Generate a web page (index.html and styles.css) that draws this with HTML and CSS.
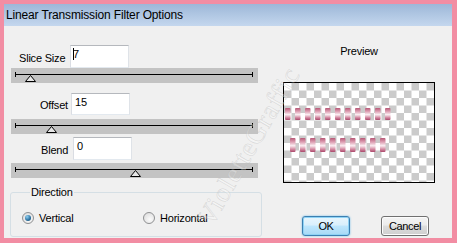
FILE: index.html
```html
<!DOCTYPE html>
<html lang="en">
<head>
  <meta charset="UTF-8">
  <title>Linear Transmission Filter Options</title>
  <link rel="stylesheet" href="styles.css">
</head>
<body>

  <div class="dialog">
    <div class="titlebar">Linear Transmission Filter Options</div>
    <div class="client">

      <div class="left">
        <div class="field field-slice">
          <label>Slice Size</label>
          <div class="input"><span class="caret"></span>7</div>
        </div>
        <div class="slider">
          <div class="rail"></div>
          <svg class="thumb" style="margin-left:14px" width="11" height="7"><polygon points="5.5,0.5 10.5,6.5 0.5,6.5" /></svg>
        </div>

        <div class="field field-offset">
          <label>Offset</label>
          <div class="input">15</div>
        </div>
        <div class="slider">
          <div class="rail"></div>
          <svg class="thumb" style="margin-left:35px" width="11" height="7"><polygon points="5.5,0.5 10.5,6.5 0.5,6.5" /></svg>
        </div>

        <div class="field field-blend">
          <label>Blend</label>
          <div class="input">0</div>
        </div>
        <div class="slider">
          <div class="rail"></div>
          <svg class="thumb" style="margin-left:119px" width="11" height="7"><polygon points="5.5,0.5 10.5,6.5 0.5,6.5" /></svg>
        </div>

        <fieldset class="group">
          <legend>Direction</legend>
          <div class="radios">
            <div class="radio checked"><span class="dot"></span>Vertical</div>
            <div class="radio"><span class="dot"></span>Horizontal</div>
          </div>
        </fieldset>
      </div>

      <div class="right">
        <div class="preview-wrap">
          <div class="preview-label">Preview</div>
          <div class="preview">
            <svg width="150" height="99">
              <defs>
                <pattern id="checker" width="15" height="15" patternUnits="userSpaceOnUse">
                  <rect width="15" height="15" fill="#ffffff" />
                  <rect x="7.5" width="7.5" height="7.5" fill="#cbcbcb" />
                  <rect y="7.5" width="7.5" height="7.5" fill="#cbcbcb" />
                </pattern>
                <linearGradient id="bar" x1="0" y1="0" x2="0" y2="1">
                  <stop offset="0" stop-color="#b65876" />
                  <stop offset="0.3" stop-color="#dfa3b6" />
                  <stop offset="0.55" stop-color="#fbeef2" />
                  <stop offset="0.8" stop-color="#d48aa2" />
                  <stop offset="1" stop-color="#a9486a" />
                </linearGradient>
              </defs>
              <rect width="150" height="99" fill="url(#checker)" />
              <g fill="url(#bar)">
                <rect x="1" y="25" width="5.5" height="12" rx="1" />
                <rect x="11" y="25" width="5.5" height="12" rx="1" />
                <rect x="21" y="25" width="5.5" height="12" rx="1" />
                <rect x="31" y="25" width="5.5" height="12" rx="1" />
                <rect x="41" y="25" width="5.5" height="12" rx="1" />
                <rect x="51" y="25" width="5.5" height="12" rx="1" />
                <rect x="61" y="25" width="5.5" height="12" rx="1" />
                <rect x="71" y="25" width="5.5" height="12" rx="1" />
                <rect x="81" y="25" width="5.5" height="12" rx="1" />
                <rect x="91" y="25" width="5.5" height="12" rx="1" />
                <rect x="101" y="25" width="5.5" height="12" rx="1" />
              </g>
              <g fill="url(#bar)">
                <rect x="6" y="55" width="5.5" height="14" rx="1" />
                <rect x="16" y="55" width="5.5" height="14" rx="1" />
                <rect x="26" y="55" width="5.5" height="14" rx="1" />
                <rect x="36" y="55" width="5.5" height="14" rx="1" />
                <rect x="46" y="55" width="5.5" height="14" rx="1" />
                <rect x="56" y="55" width="5.5" height="14" rx="1" />
                <rect x="66" y="55" width="5.5" height="14" rx="1" />
                <rect x="76" y="55" width="5.5" height="14" rx="1" />
                <rect x="86" y="55" width="5.5" height="14" rx="1" />
                <rect x="96" y="55" width="5.5" height="14" rx="1" />
              </g>
            </svg>
          </div>
        </div>
        <div class="buttons">
          <div class="btn btn-ok">OK</div>
          <div class="btn">Cancel</div>
        </div>
      </div>

    </div>
    <div class="watermark">VioletteGraffic</div>
  </div>

</body>
</html>
```

FILE: styles.css
```css
* {
  box-sizing: border-box;
}
body {
  margin: 0;
  background: #f28da3;
  font-family: "Liberation Sans", Arial, sans-serif;
  font-size: 11px;
  color: #000;
}
.dialog {
  position: relative;
  width: 457px;
  height: 243px;
  border-style: solid;
  border-color: #f28da3;
  border-width: 4px 5px 5px 4px;
  background: #f0f0f0;
  overflow: hidden;
}
.titlebar {
  height: 22px;
  padding: 4px 0 0 2px;
  background: linear-gradient(#9db7d8, #c4d7ee);
  font-size: 12px;
  letter-spacing: -0.15px;
  white-space: nowrap;
}
.client {
  display: flex;
  height: 212px;
}

/* left column */
.left {
  width: 258px;
  padding-left: 7px;
  display: flex;
  flex-direction: column;
}
.field {
  display: flex;
  align-items: center;
  height: 23px;
}
.field label {
  letter-spacing: -0.2px;
  padding-top: 2px;
}
.field-slice {
  margin-top: 19px;
  padding-left: 8px;
}
.field-slice label {
  width: 51px;
}
.field-offset {
  margin-top: 10px;
  height: 22px;
  padding-left: 29px;
}
.field-offset label {
  width: 31px;
}
.field-blend {
  margin-top: 3px;
  padding-left: 30px;
}
.field-blend label {
  width: 32px;
}
.input {
  width: 59px;
  height: 100%;
  background: #fff;
  border: 1px solid;
  border-color: #b5b8bd #dfe3e8 #e3e9ef #dadde3;
  padding: 2px 0 0 3px;
  font-size: 11px;
  line-height: 13px;
}
.caret {
  display: inline-block;
  width: 1px;
  height: 12px;
  background: #000;
  vertical-align: top;
  margin: 0 -1px 0 -1px;
}

.slider {
  height: 15px;
  width: 247px;
  background: #c3c3c3;
  display: flex;
  flex-direction: column;
  flex-shrink: 0;
}
.field-offset + .slider {
  margin-top: 4px;
}
.field-blend + .slider {
  margin-top: 3px;
}
.rail {
  position: relative;
  height: 1px;
  margin: 6px 5px 0 4px;
  background: #000;
}
.rail::before,
.rail::after {
  content: "";
  position: absolute;
  top: -2px;
  width: 1px;
  height: 5px;
  background: #000;
}
.rail::before {
  left: 0;
}
.rail::after {
  right: 0;
}
.thumb {
  display: block;
}
.thumb polygon {
  fill: #e6e6e6;
  stroke: #000;
  stroke-width: 1;
}

.group {
  margin: 8px 0 0 -1px;
  width: 252px;
  height: 51px;
  padding: 0 0 0 11px;
  border: 1px solid #d5dfe5;
  border-radius: 3px;
}
.group legend {
  padding: 0 1px;
  margin-left: 8px;
  letter-spacing: -0.2px;
  line-height: 12px;
}
.radios {
  display: flex;
  margin-top: 14px;
}
.radio {
  display: flex;
  align-items: center;
  gap: 5px;
  letter-spacing: -0.2px;
}
.radio:first-child {
  width: 121px;
}
.dot {
  position: relative;
  width: 12px;
  height: 12px;
  border-radius: 50%;
  border: 1px solid #8f9092;
  background: radial-gradient(circle at 60% 65%, #fbfbfb, #d8d8d8);
}
.checked .dot::after {
  content: "";
  position: absolute;
  left: 2px;
  top: 2px;
  width: 6px;
  height: 6px;
  border-radius: 50%;
  background: radial-gradient(circle at 35% 30%, #8fd0f2, #2a6f9e 60%, #16496c);
}

/* right column */
.right {
  flex: 1;
  display: flex;
  flex-direction: column;
}
.preview-wrap {
  margin: 19px 0 0 21px;
  width: 152px;
}
.preview-label {
  text-align: center;
  letter-spacing: -0.2px;
  height: 37px;
}
.preview {
  width: 152px;
  height: 101px;
  border: 1px solid #000;
}
.preview svg {
  display: block;
}
.buttons {
  display: flex;
  gap: 31px;
  margin: 33px 0 0 40px;
}
.btn {
  width: 48px;
  height: 20px;
  border: 1px solid #707070;
  border-radius: 3px;
  background: linear-gradient(#f4f4f4 0%, #ececec 45%, #dcdcdc 50%, #cfcfcf 100%);
  box-shadow: inset 0 0 0 1px #fcfcfc;
  text-align: center;
  line-height: 18px;
  font-size: 11px;
  letter-spacing: -0.4px;
}
.btn-ok {
  border-color: #3c7fb1;
  background: linear-gradient(#e9f6fd 0%, #d9effc 45%, #bee6fd 50%, #a7d9f5 100%);
  box-shadow: inset 0 0 0 1px #8fd3f5, 0 0 2px #62b6e6;
}

.watermark {
  position: absolute;
  left: 156px;
  top: 127px;
  font-family: "Liberation Serif", serif;
  font-size: 27px;
  letter-spacing: 1px;
  color: rgba(255, 255, 255, 0.3);
  -webkit-text-stroke: 0.5px rgba(175, 175, 175, 0.45);
  transform: rotate(-60deg);
  transform-origin: center;
  white-space: nowrap;
  pointer-events: none;
}
```
